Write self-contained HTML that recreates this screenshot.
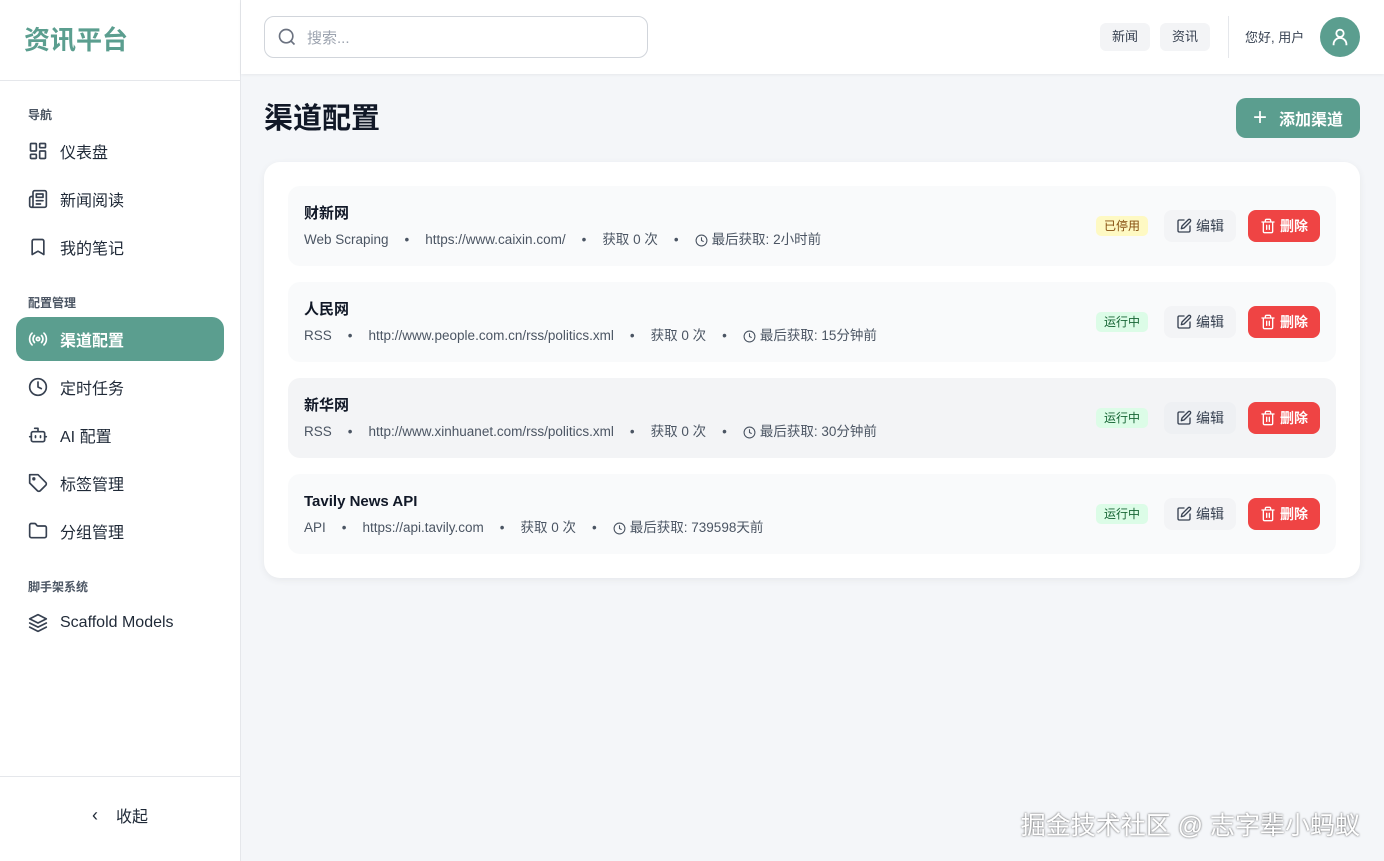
<!DOCTYPE html>
<html><head><meta charset="utf-8"><style>
*{box-sizing:border-box;margin:0;padding:0}
body{width:1384px;height:861px;overflow:hidden;font-family:"Liberation Sans","Noto Sans CJK SC",sans-serif;background:#f4f6f9;color:#1f2937;position:relative}
.side{position:absolute;left:0;top:0;width:241px;height:861px;background:#fff;border-right:1px solid #e5e7eb}
.logo{height:81px;border-bottom:1px solid #e5e7eb;padding:22px 0 0 24px;font-size:26px;font-weight:700;color:#5b9e8f;line-height:36px}
.sec{font-size:12px;color:#4b5563;font-weight:600;padding-left:28px;position:absolute}
.item{position:absolute;left:16px;width:208px;height:44px;border-radius:12px;display:flex;align-items:center;padding-left:12px;font-size:16px;color:#1f2937}
.item svg{width:20px;height:20px;margin-right:12px;fill:none;stroke:#374151;stroke-width:2;stroke-linecap:round;stroke-linejoin:round}
.item.act{background:#5b9e8f;color:#fff;font-weight:600}
.item.act svg{stroke:#fff}
.foot{position:absolute;left:0;bottom:0;width:240px;height:85px;border-top:1px solid #e5e7eb;display:flex;align-items:center;justify-content:center;font-size:16px;color:#1f2937;padding-bottom:8px}
.top{position:absolute;left:241px;top:0;right:0;height:74px;background:#fff;box-shadow:0 1px 3px rgba(0,0,0,.06)}
.search{position:absolute;left:23px;top:16px;width:384px;height:42px;border:1px solid #d1d5db;border-radius:10px;display:flex;align-items:center;padding-left:12px;color:#9ca3af;font-size:15px}
.tb{position:absolute;top:23px;height:28px;padding:0 12px;background:#f3f4f6;border-radius:6px;font-size:13px;line-height:28px;color:#374151}
h1{position:absolute;left:264px;top:99px;font-size:29px;font-weight:700;color:#111827;line-height:40px}
.add{position:absolute;left:1236px;top:98px;width:124px;height:40px;background:#5b9e8f;border-radius:10px;color:#fff;font-size:16px;font-weight:700;display:flex;align-items:center;justify-content:center}
.card{position:absolute;left:264px;top:162px;width:1096px;height:416px;background:#fff;border-radius:16px;box-shadow:0 2px 8px rgba(0,0,0,.06)}
.row{position:absolute;left:24px;width:1048px;height:80px;background:#f9fafb;border-radius:12px}
.row.h{background:#f3f4f6}
.nm{position:absolute;left:16px;top:17px;font-size:15px;font-weight:700;color:#111827;line-height:22px;height:22px}
.meta{position:absolute;left:16px;top:44px;font-size:13.5px;color:#4b5563;white-space:pre;display:flex;align-items:center;line-height:20px;height:20px}
.meta i{font-style:normal;margin:0 16px}
.meta svg{width:13px;height:13px;fill:none;stroke:#4b5563;stroke-width:2;margin-right:4px}
.bd{position:absolute;left:808px;top:30px;height:20px;padding:0 8px;border-radius:5px;font-size:12px;line-height:20px}
.ed{position:absolute;left:876px;top:24px;width:72px;height:32px;border-radius:8px;background:#f3f4f6;font-size:14px;display:flex;align-items:center;justify-content:center;color:#374151}
.dl{position:absolute;left:960px;top:24px;width:72px;height:32px;border-radius:8px;background:#ef4444;font-size:14px;display:flex;align-items:center;justify-content:center;color:#fff;font-weight:600}
.ed svg,.dl svg{width:16px;height:16px;fill:none;stroke-width:2;margin-right:4px;stroke-linecap:round;stroke-linejoin:round}
.wm{position:absolute;right:24px;top:806px;font-size:25px;color:#fff;text-shadow:0 0 2px rgba(0,0,0,.7)}
</style></head><body>
<div class="side">
<div class="logo">资讯平台</div>
<div class="sec" style="top:106px">导航</div>
<div class="item" style="top:129px"><svg viewBox="0 0 24 24"><rect x="3" y="3" width="7" height="9" rx="1"/><rect x="14" y="3" width="7" height="5" rx="1"/><rect x="14" y="12" width="7" height="9" rx="1"/><rect x="3" y="16" width="7" height="5" rx="1"/></svg>仪表盘</div>
<div class="item" style="top:177px"><svg viewBox="0 0 24 24"><path d="M4 22h16a2 2 0 0 0 2-2V4a2 2 0 0 0-2-2H8a2 2 0 0 0-2 2v16a2 2 0 0 1-4 0v-9c0-1 1-2 2-2h2M18 14h-8M15 18h-5M10 6h8v4h-8z"/></svg>新闻阅读</div>
<div class="item" style="top:225px"><svg viewBox="0 0 24 24"><path d="M19 21l-7-4-7 4V5a2 2 0 0 1 2-2h10a2 2 0 0 1 2 2z"/></svg>我的笔记</div>
<div class="sec" style="top:294px">配置管理</div>
<div class="item act" style="top:317px"><svg viewBox="0 0 24 24"><circle cx="12" cy="12" r="2"/><path d="M16.2 7.8a6 6 0 0 1 0 8.4M7.8 16.2a6 6 0 0 1 0-8.4M19.1 4.9a10 10 0 0 1 0 14.2M4.9 19.1a10 10 0 0 1 0-14.2"/></svg>渠道配置</div>
<div class="item" style="top:365px"><svg viewBox="0 0 24 24"><circle cx="12" cy="12" r="10"/><path d="M12 6v6l4 2"/></svg>定时任务</div>
<div class="item" style="top:413px"><svg viewBox="0 0 24 24"><path d="M12 8V4H8"/><rect x="4" y="8" width="16" height="12" rx="2"/><path d="M2 14h2M20 14h2M15 13v2M9 13v2"/></svg>AI 配置</div>
<div class="item" style="top:461px"><svg viewBox="0 0 24 24"><path d="M12 2H2v10l9.3 9.3a2.4 2.4 0 0 0 3.4 0l6.6-6.6a2.4 2.4 0 0 0 0-3.4z"/><circle cx="7" cy="7" r="1"/></svg>标签管理</div>
<div class="item" style="top:509px"><svg viewBox="0 0 24 24"><path d="M20 20a2 2 0 0 0 2-2V8a2 2 0 0 0-2-2h-7.9a2 2 0 0 1-1.7-.9l-.8-1.2A2 2 0 0 0 7.9 3H4a2 2 0 0 0-2 2v13a2 2 0 0 0 2 2z"/></svg>分组管理</div>
<div class="sec" style="top:578px">脚手架系统</div>
<div class="item" style="top:601px"><svg viewBox="0 0 24 24"><path d="M12 2L2 7l10 5 10-5z"/><path d="M2 12l10 5 10-5M2 17l10 5 10-5"/></svg>Scaffold Models</div>
<div class="foot"><span style="margin-right:18px;font-size:18px">‹</span>收起</div>
</div>
<div class="top">
<div class="search"><svg width="20" height="20" viewBox="0 0 24 24" fill="none" stroke="#6b7280" stroke-width="2" style="margin-right:10px"><circle cx="11" cy="11" r="8"/><path d="M21 21l-4.3-4.3"/></svg>搜索...</div>
<div class="tb" style="left:859px">新闻</div>
<div class="tb" style="left:919px">资讯</div>
<div style="position:absolute;left:987px;top:16px;width:1px;height:42px;background:#e5e7eb"></div>
<div style="position:absolute;left:1004px;top:27px;font-size:13px;color:#374151">您好, 用户</div>
<div style="position:absolute;left:1079px;top:17px;width:40px;height:40px;border-radius:50%;background:#5b9e8f;display:flex;align-items:center;justify-content:center"><svg width="22" height="22" viewBox="0 0 24 24" fill="none" stroke="#fff" stroke-width="2"><circle cx="12" cy="8" r="4"/><path d="M5 21v-1a7 7 0 0 1 14 0v1"/></svg></div>
</div>
<h1>渠道配置</h1>
<div class="add"><span style="font-size:24px;font-weight:400;margin-right:12px">+</span>添加渠道</div>
<div class="card">
<div class="row" style="top:24px"><div class="nm">财新网</div><div class="meta">Web Scraping<i>•</i>https://www.caixin.com/<i>•</i>获取 0 次<i>•</i><svg viewBox="0 0 24 24"><circle cx="12" cy="12" r="10"/><path d="M12 6v6l4 2"/></svg>最后获取: 2小时前</div><div class="bd" style="background:#fef9c3;color:#854d0e">已停用</div><div class="ed"><svg viewBox="0 0 24 24" stroke="#374151"><path d="M12 3H5a2 2 0 0 0-2 2v14a2 2 0 0 0 2 2h14a2 2 0 0 0 2-2v-7"/><path d="M18.4 2.6a2 2 0 0 1 3 3L12 15l-4 1 1-4z"/></svg>编辑</div><div class="dl"><svg viewBox="0 0 24 24" stroke="#fff"><path d="M3 6h18M19 6v14a2 2 0 0 1-2 2H7a2 2 0 0 1-2-2V6M8 6V4a2 2 0 0 1 2-2h4a2 2 0 0 1 2 2v2M10 11v6M14 11v6"/></svg>删除</div></div>
<div class="row" style="top:120px"><div class="nm">人民网</div><div class="meta">RSS<i>•</i>http://www.people.com.cn/rss/politics.xml<i>•</i>获取 0 次<i>•</i><svg viewBox="0 0 24 24"><circle cx="12" cy="12" r="10"/><path d="M12 6v6l4 2"/></svg>最后获取: 15分钟前</div><div class="bd" style="background:#dcfce7;color:#166534">运行中</div><div class="ed"><svg viewBox="0 0 24 24" stroke="#374151"><path d="M12 3H5a2 2 0 0 0-2 2v14a2 2 0 0 0 2 2h14a2 2 0 0 0 2-2v-7"/><path d="M18.4 2.6a2 2 0 0 1 3 3L12 15l-4 1 1-4z"/></svg>编辑</div><div class="dl"><svg viewBox="0 0 24 24" stroke="#fff"><path d="M3 6h18M19 6v14a2 2 0 0 1-2 2H7a2 2 0 0 1-2-2V6M8 6V4a2 2 0 0 1 2-2h4a2 2 0 0 1 2 2v2M10 11v6M14 11v6"/></svg>删除</div></div>
<div class="row h" style="top:216px"><div class="nm">新华网</div><div class="meta">RSS<i>•</i>http://www.xinhuanet.com/rss/politics.xml<i>•</i>获取 0 次<i>•</i><svg viewBox="0 0 24 24"><circle cx="12" cy="12" r="10"/><path d="M12 6v6l4 2"/></svg>最后获取: 30分钟前</div><div class="bd" style="background:#dcfce7;color:#166534">运行中</div><div class="ed" style="background:#eef0f3"><svg viewBox="0 0 24 24" stroke="#374151"><path d="M12 3H5a2 2 0 0 0-2 2v14a2 2 0 0 0 2 2h14a2 2 0 0 0 2-2v-7"/><path d="M18.4 2.6a2 2 0 0 1 3 3L12 15l-4 1 1-4z"/></svg>编辑</div><div class="dl"><svg viewBox="0 0 24 24" stroke="#fff"><path d="M3 6h18M19 6v14a2 2 0 0 1-2 2H7a2 2 0 0 1-2-2V6M8 6V4a2 2 0 0 1 2-2h4a2 2 0 0 1 2 2v2M10 11v6M14 11v6"/></svg>删除</div></div>
<div class="row" style="top:312px"><div class="nm">Tavily News API</div><div class="meta">API<i>•</i>https://api.tavily.com<i>•</i>获取 0 次<i>•</i><svg viewBox="0 0 24 24"><circle cx="12" cy="12" r="10"/><path d="M12 6v6l4 2"/></svg>最后获取: 739598天前</div><div class="bd" style="background:#dcfce7;color:#166534">运行中</div><div class="ed"><svg viewBox="0 0 24 24" stroke="#374151"><path d="M12 3H5a2 2 0 0 0-2 2v14a2 2 0 0 0 2 2h14a2 2 0 0 0 2-2v-7"/><path d="M18.4 2.6a2 2 0 0 1 3 3L12 15l-4 1 1-4z"/></svg>编辑</div><div class="dl"><svg viewBox="0 0 24 24" stroke="#fff"><path d="M3 6h18M19 6v14a2 2 0 0 1-2 2H7a2 2 0 0 1-2-2V6M8 6V4a2 2 0 0 1 2-2h4a2 2 0 0 1 2 2v2M10 11v6M14 11v6"/></svg>删除</div></div>
</div>
<div class="wm">掘金技术社区 @ 志字辈小蚂蚁</div>
</body></html>
